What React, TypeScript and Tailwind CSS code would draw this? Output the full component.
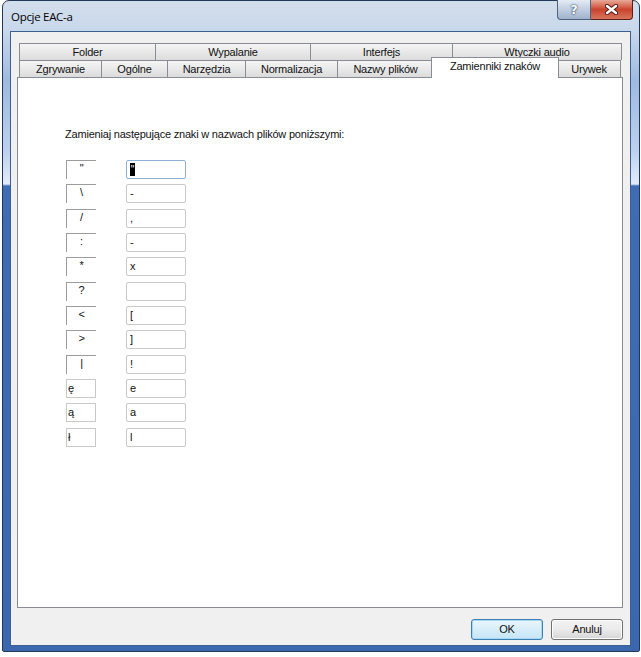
import React from "react";

type TabDef = { w: string; label: string; sel?: boolean };

const row1: TabDef[] = [
  { w: "w-[136px]", label: "Folder" },
  { w: "w-[155px]", label: "Wypalanie" },
  { w: "w-[142px]", label: "Interfejs" },
  { w: "w-[170px]", label: "Wtyczki audio" },
];

const row2: TabDef[] = [
  { w: "w-[82px]", label: "Zgrywanie" },
  { w: "w-[66px]", label: "Ogólne" },
  { w: "w-[78px]", label: "Narzędzia" },
  { w: "w-[92px]", label: "Normalizacja" },
  { w: "w-[96px]", label: "Nazwy plików" },
  { w: "w-[124px]", label: "Zamienniki znaków", sel: true },
  { w: "w-[64px]", label: "Urywek" },
];

function Tab({ t, last }: { t: TabDef; last: boolean }) {
  if (t.sel) {
    return (
      <div className={`${t.w} h-[17px] shrink-0 relative z-10`}>
        <div className="absolute -left-[2px] -right-[2px] -top-[3px] -bottom-[1px] bg-white border-t border-l border-r border-[#898c95] flex justify-center pt-[2px] leading-[13px]">
          {t.label}
        </div>
      </div>
    );
  }
  return (
    <div
      className={`${t.w} h-[17px] shrink-0 border-t border-l ${
        last ? "border-r" : ""
      } border-[#898c95] bg-linear-to-b from-[#f5f5f5] to-[#dcdcdc] flex items-center justify-center leading-[13px] pt-[1px]`}
    >
      {t.label}
    </div>
  );
}

type Row = { l: string; r: string; plain?: boolean; focus?: boolean };

const rows: Row[] = [
  { l: '"', r: "", focus: true },
  { l: "\\", r: "-" },
  { l: "/", r: "," },
  { l: ":", r: "-" },
  { l: "*", r: "x" },
  { l: "?", r: "" },
  { l: "<", r: "[" },
  { l: ">", r: "]" },
  { l: "|", r: "!" },
  { l: "ę", r: "e", plain: true },
  { l: "ą", r: "a", plain: true },
  { l: "ł", r: "l", plain: true },
];

function CharRow({ row }: { row: Row }) {
  return (
    <div className="flex h-[19px] gap-[30px]">
      {row.plain ? (
        <div className="w-[30px] h-[19px] border border-[#c9c9c9] flex items-center pl-[1px] leading-[13px]">
          {row.l}
        </div>
      ) : (
        <div className="w-[30px] h-[19px] border-t border-l border-[#9c9c9c] flex justify-center pt-[1px] leading-[13px]">
          {row.l}
        </div>
      )}
      <div
        className={`w-[60px] h-[19px] border rounded-[2px] ${
          row.focus ? "border-[#8fb0d6]" : "border-[#c8c8c8]"
        } bg-white flex items-center pl-[3px] leading-[13px]`}
      >
        {row.focus ? (
          <span className="bg-black text-white w-[5px] h-[13px] flex justify-center leading-[13px] text-[10px]">
            "
          </span>
        ) : (
          row.r
        )}
      </div>
    </div>
  );
}

export default function App() {
  return (
    <div className="w-[641px] h-[657px] bg-white overflow-hidden font-['Liberation_Sans',Arial,sans-serif] text-[11px] tracking-[-0.2px] text-[#111]">
      <div className="ml-[2px] w-[638px] h-[652px] rounded-t-[7px] rounded-b-[2px] border border-[#22385a] bg-[linear-gradient(to_bottom,#d3deeb_0px,#c8d8ec_30px,#9fbae0_80px,#bcd1ee_150px,#e3ecf8_183px,#3f6cb3_185px,#3a67ae_100%)] flex flex-col">
        {/* title bar */}
        <div className="h-[30px] flex justify-between shrink-0">
          <div className="pl-[8px] pt-[8px] font-['Open_Sans',sans-serif] text-[11.5px] leading-[16px] text-black tracking-[-0.3px]">
            Opcje EAC-a
          </div>
          <div className="flex items-start mr-[6px] -mt-[1px]">
            <div className="w-[34px] h-[20px] rounded-bl-[4px] border border-t-0 border-[#4f627e] bg-linear-to-b from-[#e4ebf4] to-[#9fb2cc] flex items-center justify-center">
              <span className="font-['DejaVu_Sans',sans-serif] font-bold text-[13px] leading-[13px] text-white [text-shadow:0_0_2px_#233a5c,0_0_1px_#233a5c]">
                ?
              </span>
            </div>
            <div className="w-[42px] h-[20px] rounded-br-[4px] border border-t-0 border-l-0 border-[#5a2018] bg-linear-to-b from-[#e8a999] via-[#c9432c] to-[#d8745c] flex items-center justify-center">
              <svg width="13" height="11" viewBox="0 0 13 11">
                <path d="M2 2 L11 9 M11 2 L2 9" stroke="#4a1a12" strokeWidth="4.2" strokeLinecap="round" />
                <path d="M2 2 L11 9 M11 2 L2 9" stroke="#ffffff" strokeWidth="2.4" strokeLinecap="round" />
              </svg>
            </div>
          </div>
        </div>
        {/* frame body */}
        <div className="flex-1 flex pl-[7px] pr-[8px] pb-[5px]">
          <div className="w-[621px] h-[615px] border border-[#3e5f92] bg-[#f0f0f0] flex flex-col pl-[6px] pt-[11px]">
            {/* tabs */}
            <div className="flex ml-[2px] h-[17px]">
              {row1.map((t, i) => (
                <Tab key={t.label} t={t} last={i === row1.length - 1} />
              ))}
            </div>
            <div className="flex ml-[2px] h-[17px]">
              {row2.map((t, i) => (
                <Tab key={t.label} t={t} last={i === row2.length - 1} />
              ))}
            </div>
            {/* panel */}
            <div className="w-[606px] h-[531px] bg-white border border-[#898c95] pl-[48px] pt-[50px]">
              <div className="leading-[13px] -ml-[1px]">
                Zamieniaj następujące znaki w nazwach plików poniższymi:
              </div>
              <div className="mt-[19px] flex flex-col gap-[5.33px]">
                {rows.map((r, i) => (
                  <CharRow key={i} row={r} />
                ))}
              </div>
            </div>
            {/* buttons */}
            <div className="flex justify-end gap-[8px] w-[606px] mt-[11px]">
              <div className="w-[72px] h-[21px] rounded-[3px] border border-[#3c7fb1] bg-linear-to-b from-[#eaf6fd] to-[#c4e5f6] shadow-[inset_0_0_0_1px_#a7d9f5] flex items-center justify-center">
                OK
              </div>
              <div className="w-[72px] h-[21px] rounded-[3px] border border-[#707070] bg-linear-to-b from-[#f2f2f2] via-[#ebebeb] to-[#d5d5d5] shadow-[inset_0_0_0_1px_#fcfcfc] flex items-center justify-center">
                Anuluj
              </div>
            </div>
          </div>
        </div>
      </div>
    </div>
  );
}
